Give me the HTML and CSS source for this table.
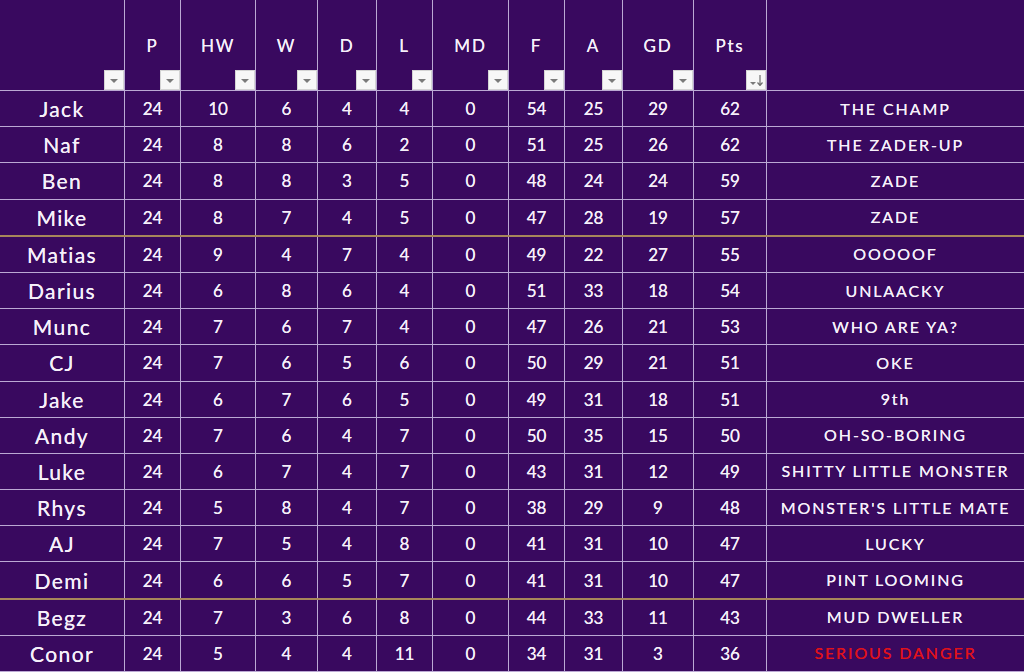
FILE: index.html
```html
<!DOCTYPE html>
<html>
<head>
<meta charset="utf-8">
<link rel="stylesheet" href="styles.css">
</head>
<body>
<div class="table">
  <div class="row head">
    <div class="cell hcell"><span class="hl"></span><span class="dd"><i class="tri"></i></span></div>
    <div class="cell hcell"><span class="hl">P</span><span class="dd"><i class="tri"></i></span></div>
    <div class="cell hcell"><span class="hl">HW</span><span class="dd"><i class="tri"></i></span></div>
    <div class="cell hcell"><span class="hl">W</span><span class="dd"><i class="tri"></i></span></div>
    <div class="cell hcell"><span class="hl">D</span><span class="dd"><i class="tri"></i></span></div>
    <div class="cell hcell"><span class="hl">L</span><span class="dd"><i class="tri"></i></span></div>
    <div class="cell hcell"><span class="hl">MD</span><span class="dd"><i class="tri"></i></span></div>
    <div class="cell hcell"><span class="hl">F</span><span class="dd"><i class="tri"></i></span></div>
    <div class="cell hcell"><span class="hl">A</span><span class="dd"><i class="tri"></i></span></div>
    <div class="cell hcell"><span class="hl">GD</span><span class="dd"><i class="tri"></i></span></div>
    <div class="cell hcell"><span class="hl">Pts</span><span class="dd sort"><i class="tri"></i><svg class="arr" width="6" height="11" viewBox="0 0 6 11"><path d="M3 0 V10 M0.5 7.5 L3 10.5 L5.5 7.5" stroke="#6f6f6f" stroke-width="1.2" fill="none"/></svg></span></div>
    <div class="cell hcell last"></div>
  </div>

  <div class="row"><div class="cell name">Jack</div><div class="cell">24</div><div class="cell">10</div><div class="cell">6</div><div class="cell">4</div><div class="cell">4</div><div class="cell">0</div><div class="cell">54</div><div class="cell">25</div><div class="cell">29</div><div class="cell">62</div><div class="cell note last">THE CHAMP</div></div>
  <div class="row"><div class="cell name">Naf</div><div class="cell">24</div><div class="cell">8</div><div class="cell">8</div><div class="cell">6</div><div class="cell">2</div><div class="cell">0</div><div class="cell">51</div><div class="cell">25</div><div class="cell">26</div><div class="cell">62</div><div class="cell note last">THE ZADER-UP</div></div>
  <div class="row"><div class="cell name">Ben</div><div class="cell">24</div><div class="cell">8</div><div class="cell">8</div><div class="cell">3</div><div class="cell">5</div><div class="cell">0</div><div class="cell">48</div><div class="cell">24</div><div class="cell">24</div><div class="cell">59</div><div class="cell note last">ZADE</div></div>
  <div class="row gold"><div class="cell name">Mike</div><div class="cell">24</div><div class="cell">8</div><div class="cell">7</div><div class="cell">4</div><div class="cell">5</div><div class="cell">0</div><div class="cell">47</div><div class="cell">28</div><div class="cell">19</div><div class="cell">57</div><div class="cell note last">ZADE</div></div>
  <div class="row"><div class="cell name">Matias</div><div class="cell">24</div><div class="cell">9</div><div class="cell">4</div><div class="cell">7</div><div class="cell">4</div><div class="cell">0</div><div class="cell">49</div><div class="cell">22</div><div class="cell">27</div><div class="cell">55</div><div class="cell note last">OOOOOF</div></div>
  <div class="row"><div class="cell name">Darius</div><div class="cell">24</div><div class="cell">6</div><div class="cell">8</div><div class="cell">6</div><div class="cell">4</div><div class="cell">0</div><div class="cell">51</div><div class="cell">33</div><div class="cell">18</div><div class="cell">54</div><div class="cell note last">UNLAACKY</div></div>
  <div class="row"><div class="cell name">Munc</div><div class="cell">24</div><div class="cell">7</div><div class="cell">6</div><div class="cell">7</div><div class="cell">4</div><div class="cell">0</div><div class="cell">47</div><div class="cell">26</div><div class="cell">21</div><div class="cell">53</div><div class="cell note last">WHO ARE YA?</div></div>
  <div class="row"><div class="cell name">CJ</div><div class="cell">24</div><div class="cell">7</div><div class="cell">6</div><div class="cell">5</div><div class="cell">6</div><div class="cell">0</div><div class="cell">50</div><div class="cell">29</div><div class="cell">21</div><div class="cell">51</div><div class="cell note last">OKE</div></div>
  <div class="row"><div class="cell name">Jake</div><div class="cell">24</div><div class="cell">6</div><div class="cell">7</div><div class="cell">6</div><div class="cell">5</div><div class="cell">0</div><div class="cell">49</div><div class="cell">31</div><div class="cell">18</div><div class="cell">51</div><div class="cell note last">9th</div></div>
  <div class="row"><div class="cell name">Andy</div><div class="cell">24</div><div class="cell">7</div><div class="cell">6</div><div class="cell">4</div><div class="cell">7</div><div class="cell">0</div><div class="cell">50</div><div class="cell">35</div><div class="cell">15</div><div class="cell">50</div><div class="cell note last">OH-SO-BORING</div></div>
  <div class="row"><div class="cell name">Luke</div><div class="cell">24</div><div class="cell">6</div><div class="cell">7</div><div class="cell">4</div><div class="cell">7</div><div class="cell">0</div><div class="cell">43</div><div class="cell">31</div><div class="cell">12</div><div class="cell">49</div><div class="cell note last">SHITTY LITTLE MONSTER</div></div>
  <div class="row"><div class="cell name">Rhys</div><div class="cell">24</div><div class="cell">5</div><div class="cell">8</div><div class="cell">4</div><div class="cell">7</div><div class="cell">0</div><div class="cell">38</div><div class="cell">29</div><div class="cell">9</div><div class="cell">48</div><div class="cell note last">MONSTER'S LITTLE MATE</div></div>
  <div class="row"><div class="cell name">AJ</div><div class="cell">24</div><div class="cell">7</div><div class="cell">5</div><div class="cell">4</div><div class="cell">8</div><div class="cell">0</div><div class="cell">41</div><div class="cell">31</div><div class="cell">10</div><div class="cell">47</div><div class="cell note last">LUCKY</div></div>
  <div class="row gold"><div class="cell name">Demi</div><div class="cell">24</div><div class="cell">6</div><div class="cell">6</div><div class="cell">5</div><div class="cell">7</div><div class="cell">0</div><div class="cell">41</div><div class="cell">31</div><div class="cell">10</div><div class="cell">47</div><div class="cell note last">PINT LOOMING</div></div>
  <div class="row"><div class="cell name">Begz</div><div class="cell">24</div><div class="cell">7</div><div class="cell">3</div><div class="cell">6</div><div class="cell">8</div><div class="cell">0</div><div class="cell">44</div><div class="cell">33</div><div class="cell">11</div><div class="cell">43</div><div class="cell note last">MUD DWELLER</div></div>
  <div class="row"><div class="cell name">Conor</div><div class="cell">24</div><div class="cell">5</div><div class="cell">4</div><div class="cell">4</div><div class="cell">11</div><div class="cell">0</div><div class="cell">34</div><div class="cell">31</div><div class="cell">3</div><div class="cell">36</div><div class="cell note danger last">SERIOUS DANGER</div></div>
</div>
</body>
</html>
```

FILE: styles.css
```css
* { box-sizing: border-box; }
html, body {
  margin: 0;
  padding: 0;
  background: #39095f;
}
body {
  width: 1024px;
  height: 672px;
  overflow: hidden;
  font-family: "Lato", "Noto Sans", sans-serif;
  color: #f6f0fa;
}
.table {
  display: flex;
  flex-direction: column;
  height: 672px;
  width: 1024px;
}
.row {
  display: grid;
  grid-template-columns: 125px 56px 75px 62px 59px 56px 76px 56px 58px 71px 73px 1fr;
  flex: 1 1 0;
  min-height: 0;
  border-bottom: 1px solid #bba9d4;
}
.row.head {
  flex: 0 0 91px;
}
.row.gold {
  border-bottom: 2px solid #a8875a;
}
.cell {
  border-right: 1px solid #bba9d4;
  display: flex;
  align-items: center;
  justify-content: center;
  font-size: 17px;
  line-height: 1;
  padding-top: 0;
  text-shadow: 0 0 0.4px #f6f0fa;
}
.cell.last {
  border-right: none;
}
.name {
  font-size: 21px;
  letter-spacing: 1.4px;
}
.note {
  font-size: 16px;
  letter-spacing: 1.9px;
}
.danger {
  color: #e0121c;
  text-shadow: 0 0 0.4px #e0121c;
}
.hcell {
  flex-direction: column;
  align-items: center;
  justify-content: flex-start;
  padding-top: 37px;
}
.hl {
  font-size: 17px;
  letter-spacing: 1.8px;
  height: 19px;
}
.dd {
  margin-top: auto;
  align-self: flex-end;
  width: 20px;
  height: 20px;
  background: #f7f7f7;
  border: 1px solid #d4d4d4;
  display: flex;
  align-items: center;
  justify-content: center;
  gap: 1px;
  text-shadow: none;
}
.tri {
  display: block;
  width: 0;
  height: 0;
  border-left: 4px solid transparent;
  border-right: 4px solid transparent;
  border-top: 4px solid #7a7a7a;
  margin-top: 1px;
}
.sort .tri {
  border-left-width: 3px;
  border-right-width: 3px;
  border-top-width: 3px;
  margin-top: 6px;
}
.arr {
  display: block;
}
```
